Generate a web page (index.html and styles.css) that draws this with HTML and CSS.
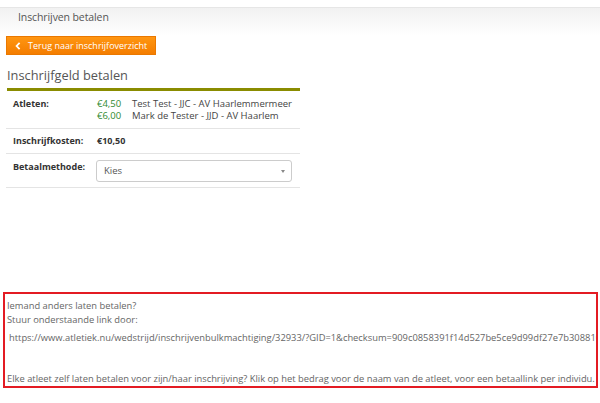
FILE: index.html
```html
<!DOCTYPE html>
<html lang="nl">
<head>
  <meta charset="UTF-8" />
  <title>Inschrijven betalen</title>
  <link rel="stylesheet" href="styles.css">
</head>
<body>
  <div class="page-header">
    <h1>Inschrijven betalen</h1>
  </div>

  <div class="content">
    <a class="btn-back" href="#">
      <svg class="chev" width="6" height="8" viewBox="0 0 6 8">
        <path d="M4.6 0.8 L1.6 4 L4.6 7.2" fill="none" stroke="#fff" stroke-width="1.8"/>
      </svg>
      Terug naar inschrijfoverzicht
    </a>

    <h2 class="section-title">Inschrijfgeld betalen</h2>

    <table class="pay-table">
      <tr>
        <th>Atleten:</th>
        <td>
          <div class="athlete"><span class="amount">€4,50</span>Test Test - JJC - AV Haarlemmermeer</div>
          <div class="athlete"><span class="amount">€6,00</span>Mark de Tester - JJD - AV Haarlem</div>
        </td>
      </tr>
      <tr>
        <th>Inschrijfkosten:</th>
        <td class="total">€10,50</td>
      </tr>
      <tr>
        <th>Betaalmethode:</th>
        <td>
          <div class="select">
            <span>Kies</span>
            <span class="caret"></span>
          </div>
        </td>
      </tr>
    </table>
  </div>

  <div class="share-box">
    <p>Iemand anders laten betalen?</p>
    <p>Stuur onderstaande link door:</p>
    <p class="link">https://www.atletiek.nu/wedstrijd/inschrijvenbulkmachtiging/32933/?GID=1&amp;checksum=909c0858391f14d527be5ce9d99df27e7b30881064a2</p>
    <p class="note">Elke atleet zelf laten betalen voor zijn/haar inschrijving? Klik op het bedrag voor de naam van de atleet, voor een betaallink per individu.</p>
  </div>
</body>
</html>
```

FILE: styles.css
```css
* { box-sizing: border-box; }
body {
  margin: 0;
  font-family: "Open Sans", "Noto Sans", sans-serif;
  color: #555;
  background: #fff;
}

/* grey bar on top */
.page-header {
  margin-top: 7px;
  height: 28px;
  border-top: 1px solid #e6e6e6;
  background: linear-gradient(#f1f1f1, #fff);
  padding-left: 18px;
}
.page-header h1 {
  margin: 0;
  font-size: 10.5px;
  letter-spacing: -0.1px;
  font-weight: normal;
  line-height: 18px;
  color: #555;
}

.content {
  padding-left: 6px;
  width: 300px;
}

.btn-back {
  display: flex;
  align-items: center;
  height: 19px;
  width: 150px;
  margin-top: 1px;
  padding-left: 8px;
  background: linear-gradient(#ff9611, #f47d00);
  border: 1px solid #ea7800;
  color: #fff;
  font-size: 9px;
  text-decoration: none;
  white-space: nowrap;
}
.btn-back .chev {
  margin-right: 7px;
}

.section-title {
  margin: 11px 0 0 1px;
  font-size: 12.8px;
  font-weight: normal;
  color: #555;
  line-height: 18px;
  padding-bottom: 4px;
  border-bottom: 3px solid #8a8c00;
}

.pay-table {
  width: 294px;
  border-collapse: collapse;
  font-size: 9.5px;
  color: #333;
}
.pay-table th,
.pay-table td {
  text-align: left;
  vertical-align: top;
  border-bottom: 1px solid #e4e4e4;
  padding: 6px 0;
  line-height: 12px;
}
.pay-table th {
  width: 91px;
  padding-left: 7px;
  font-size: 9px;
  font-weight: bold;
}
.pay-table tr:first-child th,
.pay-table tr:first-child td { padding-top: 7px; }
.pay-table tr:last-child th { padding-top: 7px; padding-bottom: 5px; }
.pay-table tr:last-child td { padding: 6px 0 5px; }
.pay-table .total { font-size: 9px; font-weight: bold; }

.athlete { color: #444; }
.amount {
  display: inline-block;
  width: 35px;
  color: #2f8a2f;
}

.select {
  display: flex;
  align-items: center;
  justify-content: space-between;
  width: 196px;
  height: 22px;
  margin-left: -1px;
  padding: 0 6px 0 7px;
  border: 1px solid #ccc;
  border-radius: 3px;
  color: #555;
}
.caret {
  border-left: 2.5px solid transparent;
  border-right: 2.5px solid transparent;
  border-top: 3px solid #888;
}

/* red highlighted block */
.share-box {
  margin: 104px 2px 0 3px;
  height: 96px;
  border: 2px solid #e31b23;
  padding: 5px 0 0 2px;
  overflow: hidden;
  font-size: 9.35px;
  color: #666;
  white-space: nowrap;
}
.share-box p {
  margin: 0;
  line-height: 14px;
}
.share-box .link {
  margin: 4px 0 0 2px;
}
.share-box .note {
  margin-top: 27px;
}
```
